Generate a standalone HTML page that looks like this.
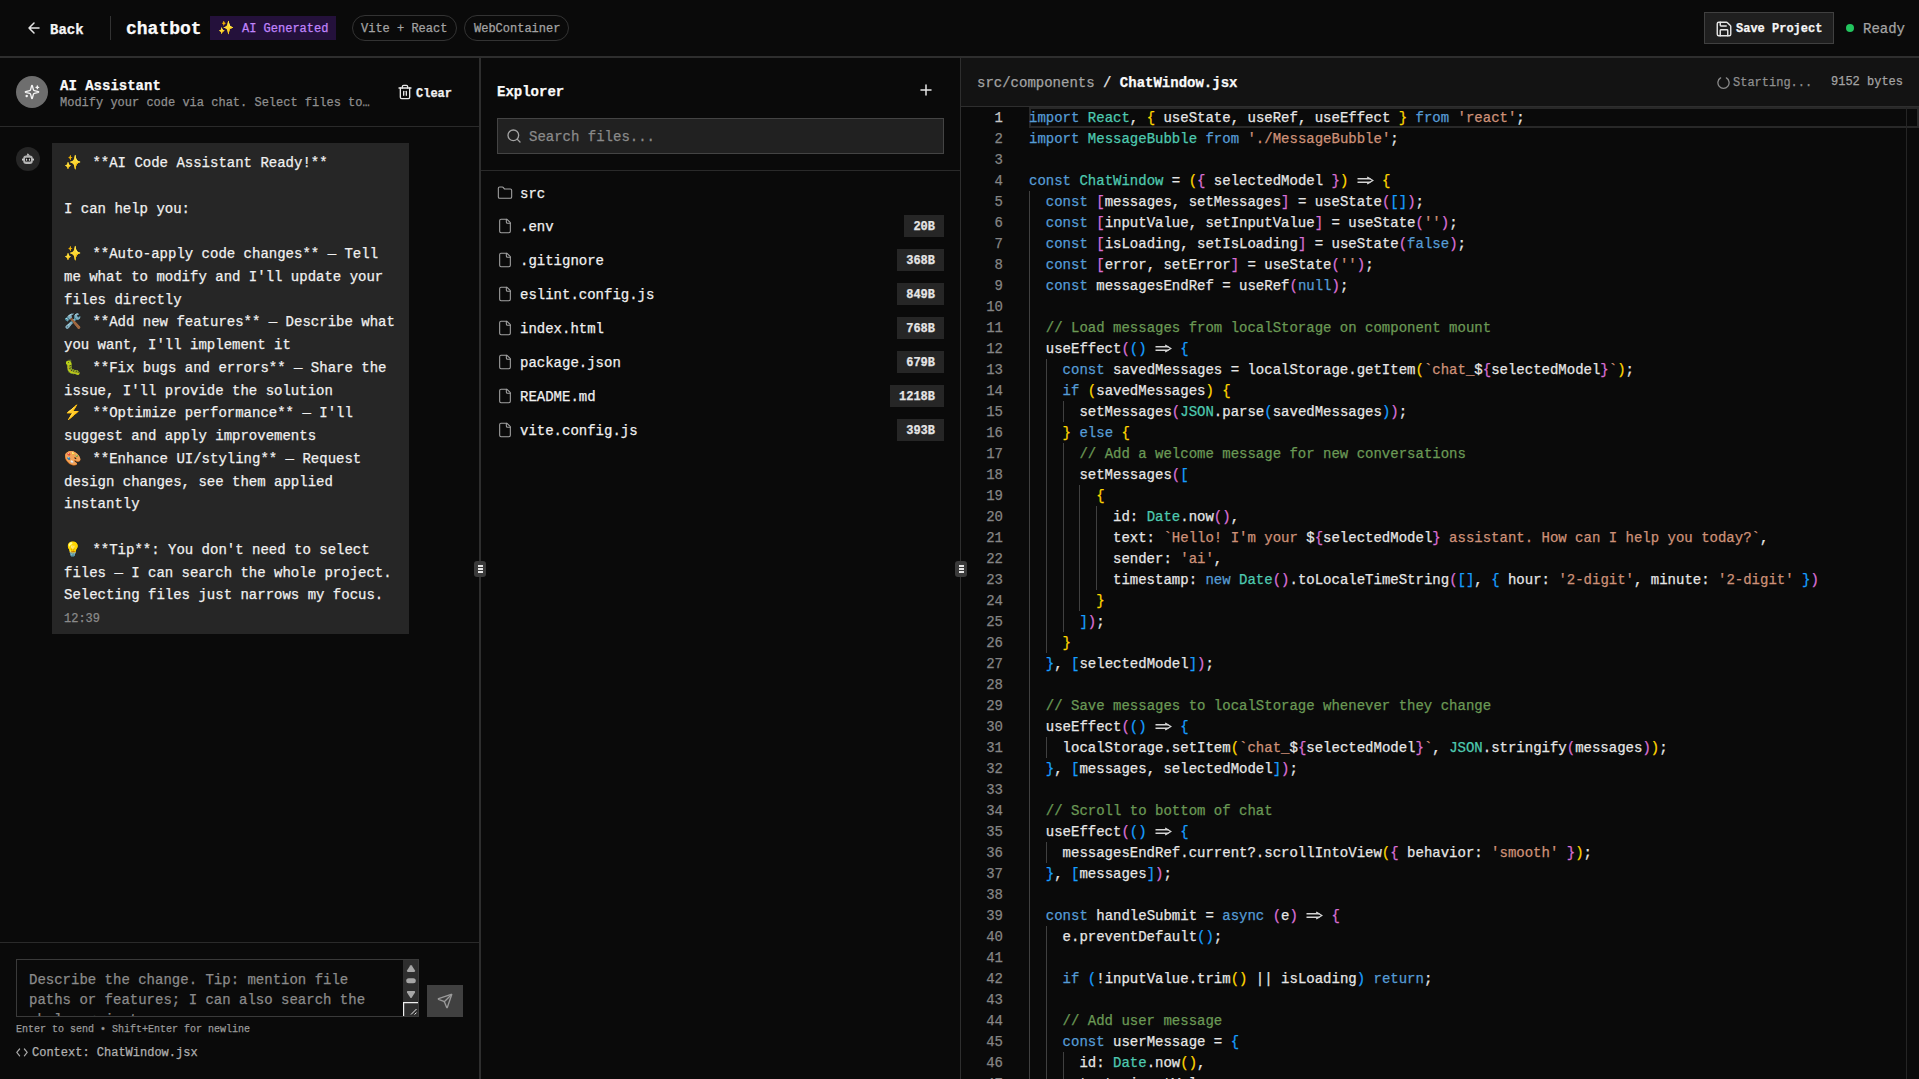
<!DOCTYPE html>
<html><head><meta charset="utf-8">
<style>
*{box-sizing:border-box;margin:0;padding:0}
html,body{width:1919px;height:1079px;overflow:hidden;background:#0a0a0a;font-family:"Liberation Mono",monospace;color:#e5e5e5;-webkit-text-stroke:0.25px currentColor}
.abs{position:absolute}
#hdr{position:absolute;left:0;top:0;width:1919px;height:58px;background:#0a0a0a;border-bottom:2px solid #2e2e2e}
.t14b{font-size:14px;font-weight:bold}
/* chat */
#chat{position:absolute;left:0;top:58px;width:479px;height:1021px;background:#0a0a0a}
#div1{position:absolute;z-index:4;left:479px;top:58px;width:2px;height:1021px;background:#2e2e2e}
#explorer{position:absolute;left:481px;top:58px;width:479px;height:1021px;background:#0a0a0a}
#div2{position:absolute;z-index:4;left:960px;top:58px;width:1px;height:1021px;background:#2e2e2e}
#editor{position:absolute;left:961px;top:58px;width:958px;height:1021px;background:#0a0a0a;overflow:hidden}
.handle{position:absolute;z-index:5;width:12px;height:16px;background:#3a3a3a;border-radius:3px}
.handle i{position:absolute;left:3.5px;width:5px;height:2px;background:#e5e5e5}
/* code */
#code{position:absolute;left:68px;top:49px;width:890px;height:980px;font-size:14px;line-height:21px;color:#e6e6e6}
.ln{position:absolute;left:0;white-space:pre;height:21px;margin-top:1px}
#gut{position:absolute;left:0;top:50px;width:42px;font-size:14px;line-height:21px;color:#858585}
.num{position:absolute;right:0;height:21px;text-align:right;white-space:pre}
.num.act{color:#c6c6c6}
.k{color:#569cd6}.t{color:#4ec9b0}.s{color:#ce9178}.c{color:#6a9955}
.ar{display:inline-block;width:16.8px;height:21px;vertical-align:top;position:relative;top:-1px}.ar svg{display:block}
.ig{position:absolute;width:1px;background:#404040}
.em{display:inline-block;width:28.4px;white-space:nowrap}
</style></head><body>

<div id="hdr">
  <svg class="abs" style="left:27px;top:21px" width="14" height="14" viewBox="0 0 14 14" fill="none" stroke="#e5e5e5" stroke-width="1.5" stroke-linecap="round" stroke-linejoin="round"><path d="M12 7H2M7 2L2 7l5 5"/></svg>
  <div class="abs t14b" style="left:50px;top:21px;line-height:18px;color:#f5f5f5">Back</div>
  <div class="abs" style="left:110px;top:16px;width:1px;height:24px;background:#333"></div>
  <div class="abs" style="left:126px;top:17px;font-size:18px;font-weight:bold;line-height:24px;color:#fafafa">chatbot</div>
  <div class="abs" style="left:210px;top:16px;width:126px;height:24px;background:#24113b"></div><div class="abs" style="left:218px;top:17px;font-size:13px;line-height:24px">✨</div><div class="abs" style="left:242px;top:17px;color:#c084fc;font-size:12px;line-height:24px;white-space:pre">AI Generated</div>
  <div class="abs" style="left:352px;top:15px;width:105px;height:26px;border:1px solid #333;border-radius:13px;color:#a3a3a3;font-size:12px;line-height:24px;padding-left:8px;padding-top:1px">Vite + React</div>
  <div class="abs" style="left:464px;top:15px;width:105px;height:26px;border:1px solid #333;border-radius:13px;color:#a3a3a3;font-size:12px;line-height:24px;padding-left:9px;padding-top:1px">WebContainer</div>
  <div class="abs" style="left:1704px;top:12px;width:130px;height:32px;background:#1f1f1f;border:1px solid #404040"></div>
  <svg class="abs" style="left:1715px;top:20px" width="18" height="18" viewBox="0 0 24 24" fill="none" stroke="#e5e5e5" stroke-width="1.9" stroke-linecap="round" stroke-linejoin="round"><path d="M15.2 3a2 2 0 0 1 1.4.6l3.8 3.8a2 2 0 0 1 .6 1.4V19a2 2 0 0 1-2 2H5a2 2 0 0 1-2-2V5a2 2 0 0 1 2-2z"/><path d="M17 21v-7a1 1 0 0 0-1-1H8a1 1 0 0 0-1 1v7"/><path d="M7 3v4a1 1 0 0 0 1 1h7"/></svg>
  <div class="abs" style="left:1736px;top:21px;font-size:12px;font-weight:bold;line-height:16px;color:#f5f5f5">Save Project</div>
  <div class="abs" style="left:1846px;top:24px;width:8px;height:8px;border-radius:50%;background:#22c55e"></div>
  <div class="abs" style="left:1863px;top:20px;font-size:14px;line-height:18px;color:#a3a3a3">Ready</div>
</div>

<div id="chat">
  <div class="abs" style="left:0;top:0;width:479px;height:69px;border-bottom:1px solid #2a2a2a"></div>
  <div class="abs" style="left:16px;top:18px;width:32px;height:32px;border-radius:50%;background:#6e6e6e"></div>
  <svg class="abs" style="left:24px;top:26px" width="16" height="16" viewBox="0 0 24 24" fill="none" stroke="#f5f5f5" stroke-width="2" stroke-linecap="round" stroke-linejoin="round"><path d="M9.937 15.5A2 2 0 0 0 8.5 14.063l-6.135-1.582a.5.5 0 0 1 0-.962L8.5 9.936A2 2 0 0 0 9.937 8.5l1.582-6.135a.5.5 0 0 1 .963 0L14.063 8.5A2 2 0 0 0 15.5 9.937l6.135 1.581a.5.5 0 0 1 0 .964L15.5 14.063a2 2 0 0 0-1.437 1.437l-1.582 6.135a.5.5 0 0 1-.963 0z"/><path d="M20 3v4"/><path d="M22 5h-4"/><path d="M4 17v2"/><path d="M5 18H3"/></svg>
  <div class="abs t14b" style="left:60px;top:19px;line-height:18px;color:#fafafa">AI Assistant</div>
  <div class="abs" style="left:60px;top:37px;font-size:12px;line-height:16px;color:#8f8f8f;white-space:pre">Modify your code via chat. Select files to…</div>
  <svg class="abs" style="left:397px;top:26px" width="16" height="16" viewBox="0 0 24 24" fill="none" stroke="#e5e5e5" stroke-width="2" stroke-linecap="round" stroke-linejoin="round"><path d="M3 6h18"/><path d="M19 6v14c0 1-1 2-2 2H7c-1 0-2-1-2-2V6"/><path d="M8 6V4c0-1 1-2 2-2h4c1 0 2 1 2 2v2"/><line x1="10" x2="10" y1="11" y2="17"/><line x1="14" x2="14" y1="11" y2="17"/></svg>
  <div class="abs" style="left:416px;top:28px;font-size:12px;font-weight:bold;line-height:16px;color:#f0f0f0">Clear</div>

  <div class="abs" style="left:16px;top:89px;width:24px;height:24px;border-radius:50%;background:#262626"></div>
  <svg class="abs" style="left:22px;top:95px" width="12" height="12" viewBox="0 0 12 12"><path d="M4.6 2.8L5.4 0.6Q6 0.3 6.6 0.9L8 2.8Z" fill="#bdbdbd"/><rect x="1.2" y="2.6" width="9.6" height="8.4" rx="3" fill="#b5b5b5"/><circle cx="0.9" cy="6.6" r="1.1" fill="#c8c8c8"/><circle cx="11.1" cy="6.6" r="1.1" fill="#c8c8c8"/><rect x="3.2" y="4.8" width="5.6" height="3.8" rx="0.6" fill="#0a0a0a"/><rect x="4.2" y="5.5" width="1" height="2.2" rx="0.5" fill="#fff"/><rect x="6.8" y="5.5" width="1" height="2.2" rx="0.5" fill="#fff"/></svg>
  <div class="abs" style="left:52px;top:85px;width:357px;height:491px;background:#262626"></div>
  <div id="bub" class="abs" style="left:64px;top:94px;font-size:14px;line-height:22.75px;color:#f0f0f0;white-space:pre"><span class="em">✨</span>**AI Code Assistant Ready!**

I can help you:

<span class="em">✨</span>**Auto-apply code changes** — Tell
me what to modify and I'll update your
files directly
<span class="em">🛠️</span>**Add new features** — Describe what
you want, I'll implement it
<span class="em">🐛</span>**Fix bugs and errors** — Share the
issue, I'll provide the solution
<span class="em">⚡️</span>**Optimize performance** — I'll
suggest and apply improvements
<span class="em">🎨</span>**Enhance UI/styling** — Request
design changes, see them applied
instantly

<span class="em">💡</span>**Tip**: You don't need to select
files — I can search the whole project.
Selecting files just narrows my focus.</div>
  <div class="abs" style="left:64px;top:553px;font-size:12px;line-height:16px;color:#8a8a8a">12:39</div>

  <div class="abs" style="left:0;top:884px;width:479px;height:1px;background:#2a2a2a"></div>
  <div class="abs" style="left:16px;top:901px;width:403px;height:58px;border:1px solid #3a3a3a;background:#0a0a0a;overflow:hidden">
    <div class="abs" style="left:12px;top:10px;font-size:14px;line-height:20px;color:#8a8a8a;white-space:pre">Describe the change. Tip: mention file
paths or features; I can also search the
whole project.</div>
    <div class="abs" style="left:386px;top:0;width:16px;height:56px;background:#2e2e2e"></div>
    <svg class="abs" style="left:386px;top:1px" width="16" height="55" viewBox="0 0 16 55"><path d="M7.2 4.6Q8 3.6 8.8 4.6L12 9.6Q12.6 11 11 11H5Q3.4 11 4 9.6Z" fill="#a6a6a6"/><rect x="3.2" y="17.2" width="9.6" height="5" rx="2.5" fill="#a6a6a6"/><path d="M7.2 36.4Q8 37.4 8.8 36.4L12 31.4Q12.6 30 11 30H5Q3.4 30 4 31.4Z" fill="#a6a6a6"/><path d="M0.6 55V41.6H15.6" fill="none" stroke="#f0f0f0" stroke-width="1.2"/><path d="M8 53.5L13.5 48M11.6 53.5L13.5 51.6" stroke="#f0f0f0" stroke-width="1"/></svg>
  </div>
  <div class="abs" style="left:427px;top:927px;width:36px;height:32px;background:#404040"></div>
  <svg class="abs" style="left:437px;top:935px" width="16" height="16" viewBox="0 0 24 24" fill="none" stroke="#9a9a9a" stroke-width="2" stroke-linecap="round" stroke-linejoin="round"><path d="M14.536 21.686a.5.5 0 0 0 .937-.024l6.5-19a.496.496 0 0 0-.635-.635l-19 6.5a.5.5 0 0 0-.024.937l7.93 3.18a2 2 0 0 1 1.112 1.11z"/><path d="m21.854 2.147-10.94 10.939"/></svg>
  <div class="abs" style="left:16px;top:966px;font-size:10px;line-height:12px;color:#9a9a9a;white-space:pre">Enter to send • Shift+Enter for newline</div>
  <svg class="abs" style="left:16px;top:990px" width="12" height="9" viewBox="0 0 12 9" fill="none" stroke="#a8a8a8" stroke-width="1.2" stroke-linecap="round" stroke-linejoin="round"><path d="M3.6 1L0.8 4.4L3.6 7.8"/><path d="M8.4 1L11.2 4.4L8.4 7.8"/></svg>
  <div class="abs" style="left:32px;top:987px;font-size:12px;line-height:16px;color:#b0b0b0;white-space:pre">Context: ChatWindow.jsx</div>
</div>
<div id="div1"><div class="handle" style="left:-5px;top:503px"><i style="top:4px"></i><i style="top:7px"></i><i style="top:10px"></i></div></div>
<div id="explorer">
  <div class="abs t14b" style="left:16px;top:25px;line-height:18px;color:#fafafa">Explorer</div>
  <svg class="abs" style="left:439px;top:26px" width="12" height="12" viewBox="0 0 12 12" fill="none" stroke="#e5e5e5" stroke-width="1.5" stroke-linecap="round"><path d="M1 6H11M6 1V11"/></svg>
  <div class="abs" style="left:16px;top:60px;width:447px;height:36px;background:#212121;border:1px solid #444"></div>
  <svg class="abs" style="left:25px;top:70px" width="16" height="16" viewBox="0 0 24 24" fill="none" stroke="#a3a3a3" stroke-width="2" stroke-linecap="round" stroke-linejoin="round"><circle cx="11" cy="11" r="8"/><path d="m21 21-4.3-4.3"/></svg>
  <div class="abs" style="left:48px;top:70px;font-size:14px;line-height:18px;color:#8a8a8a;white-space:pre">Search files...</div>
  <div class="abs" style="left:0;top:112px;width:479px;height:1px;background:#2a2a2a"></div>
<svg class="abs" style="left:16px;top:127px" width="16" height="16" viewBox="0 0 24 24" fill="none" stroke="#a3a3a3" stroke-width="1.6" stroke-linecap="round" stroke-linejoin="round"><path d="M20 20a2 2 0 0 0 2-2V8a2 2 0 0 0-2-2h-7.9a2 2 0 0 1-1.69-.9L9.6 3.9A2 2 0 0 0 7.93 3H4a2 2 0 0 0-2 2v13a2 2 0 0 0 2 2Z"/></svg>
<div class="abs" style="left:39px;top:127px;font-size:14px;line-height:18px;color:#f0f0f0">src</div>
<svg class="abs" style="left:16px;top:160px" width="16" height="16" viewBox="0 0 24 24" fill="none" stroke="#a3a3a3" stroke-width="1.6" stroke-linecap="round" stroke-linejoin="round"><path d="M15 2H6a2 2 0 0 0-2 2v16a2 2 0 0 0 2 2h12a2 2 0 0 0 2-2V7Z"/><path d="M14 2v4a2 2 0 0 0 2 2h4"/></svg>
<div class="abs" style="left:39px;top:160px;font-size:14px;line-height:18px;color:#f0f0f0">.env</div>
<div class="abs" style="right:16px;top:157px;height:22px;padding:0 9px;background:#262626;font-size:12px;font-weight:bold;line-height:22px;color:#e5e5e5"><span style="position:relative;top:1px">20B</span></div>
<svg class="abs" style="left:16px;top:194px" width="16" height="16" viewBox="0 0 24 24" fill="none" stroke="#a3a3a3" stroke-width="1.6" stroke-linecap="round" stroke-linejoin="round"><path d="M15 2H6a2 2 0 0 0-2 2v16a2 2 0 0 0 2 2h12a2 2 0 0 0 2-2V7Z"/><path d="M14 2v4a2 2 0 0 0 2 2h4"/></svg>
<div class="abs" style="left:39px;top:194px;font-size:14px;line-height:18px;color:#f0f0f0">.gitignore</div>
<div class="abs" style="right:16px;top:191px;height:22px;padding:0 9px;background:#262626;font-size:12px;font-weight:bold;line-height:22px;color:#e5e5e5"><span style="position:relative;top:1px">368B</span></div>
<svg class="abs" style="left:16px;top:228px" width="16" height="16" viewBox="0 0 24 24" fill="none" stroke="#a3a3a3" stroke-width="1.6" stroke-linecap="round" stroke-linejoin="round"><path d="M15 2H6a2 2 0 0 0-2 2v16a2 2 0 0 0 2 2h12a2 2 0 0 0 2-2V7Z"/><path d="M14 2v4a2 2 0 0 0 2 2h4"/></svg>
<div class="abs" style="left:39px;top:228px;font-size:14px;line-height:18px;color:#f0f0f0">eslint.config.js</div>
<div class="abs" style="right:16px;top:225px;height:22px;padding:0 9px;background:#262626;font-size:12px;font-weight:bold;line-height:22px;color:#e5e5e5"><span style="position:relative;top:1px">849B</span></div>
<svg class="abs" style="left:16px;top:262px" width="16" height="16" viewBox="0 0 24 24" fill="none" stroke="#a3a3a3" stroke-width="1.6" stroke-linecap="round" stroke-linejoin="round"><path d="M15 2H6a2 2 0 0 0-2 2v16a2 2 0 0 0 2 2h12a2 2 0 0 0 2-2V7Z"/><path d="M14 2v4a2 2 0 0 0 2 2h4"/></svg>
<div class="abs" style="left:39px;top:262px;font-size:14px;line-height:18px;color:#f0f0f0">index.html</div>
<div class="abs" style="right:16px;top:259px;height:22px;padding:0 9px;background:#262626;font-size:12px;font-weight:bold;line-height:22px;color:#e5e5e5"><span style="position:relative;top:1px">768B</span></div>
<svg class="abs" style="left:16px;top:296px" width="16" height="16" viewBox="0 0 24 24" fill="none" stroke="#a3a3a3" stroke-width="1.6" stroke-linecap="round" stroke-linejoin="round"><path d="M15 2H6a2 2 0 0 0-2 2v16a2 2 0 0 0 2 2h12a2 2 0 0 0 2-2V7Z"/><path d="M14 2v4a2 2 0 0 0 2 2h4"/></svg>
<div class="abs" style="left:39px;top:296px;font-size:14px;line-height:18px;color:#f0f0f0">package.json</div>
<div class="abs" style="right:16px;top:293px;height:22px;padding:0 9px;background:#262626;font-size:12px;font-weight:bold;line-height:22px;color:#e5e5e5"><span style="position:relative;top:1px">679B</span></div>
<svg class="abs" style="left:16px;top:330px" width="16" height="16" viewBox="0 0 24 24" fill="none" stroke="#a3a3a3" stroke-width="1.6" stroke-linecap="round" stroke-linejoin="round"><path d="M15 2H6a2 2 0 0 0-2 2v16a2 2 0 0 0 2 2h12a2 2 0 0 0 2-2V7Z"/><path d="M14 2v4a2 2 0 0 0 2 2h4"/></svg>
<div class="abs" style="left:39px;top:330px;font-size:14px;line-height:18px;color:#f0f0f0">README.md</div>
<div class="abs" style="right:16px;top:327px;height:22px;padding:0 9px;background:#262626;font-size:12px;font-weight:bold;line-height:22px;color:#e5e5e5"><span style="position:relative;top:1px">1218B</span></div>
<svg class="abs" style="left:16px;top:364px" width="16" height="16" viewBox="0 0 24 24" fill="none" stroke="#a3a3a3" stroke-width="1.6" stroke-linecap="round" stroke-linejoin="round"><path d="M15 2H6a2 2 0 0 0-2 2v16a2 2 0 0 0 2 2h12a2 2 0 0 0 2-2V7Z"/><path d="M14 2v4a2 2 0 0 0 2 2h4"/></svg>
<div class="abs" style="left:39px;top:364px;font-size:14px;line-height:18px;color:#f0f0f0">vite.config.js</div>
<div class="abs" style="right:16px;top:361px;height:22px;padding:0 9px;background:#262626;font-size:12px;font-weight:bold;line-height:22px;color:#e5e5e5"><span style="position:relative;top:1px">393B</span></div>
</div>
<div id="div2"><div class="handle" style="left:-5px;top:503px"><i style="top:4px"></i><i style="top:7px"></i><i style="top:10px"></i></div></div>
<div id="editor">
  <div class="abs" style="left:0;top:0;width:958px;height:49px;background:#131313;border-bottom:1px solid #2e2e2e"></div>
  <div class="abs" style="left:16px;top:16px;font-size:14px;line-height:18px;color:#a3a3a3;white-space:pre">src/components <span style="color:#e5e5e5">/</span> <b style="color:#fafafa">ChatWindow.jsx</b></div>
  <svg class="abs" style="left:756px;top:18px" width="13" height="13" viewBox="0 0 13 13" fill="none" stroke="#8a8a8a" stroke-width="1.3" stroke-linecap="round"><path d="M3.6 1.9A5.6 5.6 0 1 0 9.4 1.9"/></svg>
  <div class="abs" style="left:772px;top:17px;font-size:12px;line-height:16px;color:#8f8f8f;white-space:pre">Starting...</div>
  <div class="abs" style="left:870px;top:16px;font-size:12px;line-height:16px;color:#a3a3a3;white-space:pre">9152 bytes</div>
  <div class="abs" style="left:945px;top:49px;width:1px;height:980px;background:#252525;z-index:3"></div>
  <div id="gut"><div class="num act" style="top:0px">1</div><div class="num" style="top:21px">2</div><div class="num" style="top:42px">3</div><div class="num" style="top:63px">4</div><div class="num" style="top:84px">5</div><div class="num" style="top:105px">6</div><div class="num" style="top:126px">7</div><div class="num" style="top:147px">8</div><div class="num" style="top:168px">9</div><div class="num" style="top:189px">10</div><div class="num" style="top:210px">11</div><div class="num" style="top:231px">12</div><div class="num" style="top:252px">13</div><div class="num" style="top:273px">14</div><div class="num" style="top:294px">15</div><div class="num" style="top:315px">16</div><div class="num" style="top:336px">17</div><div class="num" style="top:357px">18</div><div class="num" style="top:378px">19</div><div class="num" style="top:399px">20</div><div class="num" style="top:420px">21</div><div class="num" style="top:441px">22</div><div class="num" style="top:462px">23</div><div class="num" style="top:483px">24</div><div class="num" style="top:504px">25</div><div class="num" style="top:525px">26</div><div class="num" style="top:546px">27</div><div class="num" style="top:567px">28</div><div class="num" style="top:588px">29</div><div class="num" style="top:609px">30</div><div class="num" style="top:630px">31</div><div class="num" style="top:651px">32</div><div class="num" style="top:672px">33</div><div class="num" style="top:693px">34</div><div class="num" style="top:714px">35</div><div class="num" style="top:735px">36</div><div class="num" style="top:756px">37</div><div class="num" style="top:777px">38</div><div class="num" style="top:798px">39</div><div class="num" style="top:819px">40</div><div class="num" style="top:840px">41</div><div class="num" style="top:861px">42</div><div class="num" style="top:882px">43</div><div class="num" style="top:903px">44</div><div class="num" style="top:924px">45</div><div class="num" style="top:945px">46</div><div class="num" style="top:966px">47</div><div class="num" style="top:987px">48</div></div>
  <div id="code"><div class="ig" style="left:0.0px;top:84px;height:924px"></div><div class="ig" style="left:16.8px;top:252px;height:294px"></div><div class="ig" style="left:16.8px;top:630px;height:21px"></div><div class="ig" style="left:16.8px;top:735px;height:21px"></div><div class="ig" style="left:16.8px;top:819px;height:189px"></div><div class="ig" style="left:33.6px;top:294px;height:21px"></div><div class="ig" style="left:33.6px;top:336px;height:189px"></div><div class="ig" style="left:33.6px;top:945px;height:63px"></div><div class="ig" style="left:50.4px;top:378px;height:126px"></div><div class="ig" style="left:67.2px;top:399px;height:84px"></div><div class="abs" style="left:0;top:0;width:890px;height:21px;border:2px solid #282828"></div><div class="ln" style="top:0px"><span class="k">import</span> <span class="t">React</span>, <span style="color:#ffd700">{</span> useState, useRef, useEffect <span style="color:#ffd700">}</span> <span class="k">from</span> <span class="s">'react'</span>;</div><div class="ln" style="top:21px"><span class="k">import</span> <span class="t">MessageBubble</span> <span class="k">from</span> <span class="s">'./MessageBubble'</span>;</div><div class="ln" style="top:42px"></div><div class="ln" style="top:63px"><span class="k">const</span> <span class="t">ChatWindow</span> = <span style="color:#ffd700">(</span><span style="color:#da70d6">{</span> selectedModel <span style="color:#da70d6">}</span><span style="color:#ffd700">)</span> <span class="ar"><svg width="16.8" height="21" viewBox="0 0 16.8 21" fill="none" stroke="#d4d4d4" stroke-width="1.4"><path d="M0.5 8.8H13.5M0.5 12.2H13.5"/><path d="M10.2 7L15.8 10.5L10.2 14" stroke-linejoin="miter"/></svg></span> <span style="color:#ffd700">{</span></div><div class="ln" style="top:84px">  <span class="k">const</span> <span style="color:#da70d6">[</span>messages, setMessages<span style="color:#da70d6">]</span> = useState<span style="color:#da70d6">(</span><span style="color:#179fff">[</span><span style="color:#179fff">]</span><span style="color:#da70d6">)</span>;</div><div class="ln" style="top:105px">  <span class="k">const</span> <span style="color:#da70d6">[</span>inputValue, setInputValue<span style="color:#da70d6">]</span> = useState<span style="color:#da70d6">(</span><span class="s">''</span><span style="color:#da70d6">)</span>;</div><div class="ln" style="top:126px">  <span class="k">const</span> <span style="color:#da70d6">[</span>isLoading, setIsLoading<span style="color:#da70d6">]</span> = useState<span style="color:#da70d6">(</span><span class="k">false</span><span style="color:#da70d6">)</span>;</div><div class="ln" style="top:147px">  <span class="k">const</span> <span style="color:#da70d6">[</span>error, setError<span style="color:#da70d6">]</span> = useState<span style="color:#da70d6">(</span><span class="s">''</span><span style="color:#da70d6">)</span>;</div><div class="ln" style="top:168px">  <span class="k">const</span> messagesEndRef = useRef<span style="color:#da70d6">(</span><span class="k">null</span><span style="color:#da70d6">)</span>;</div><div class="ln" style="top:189px"></div><div class="ln" style="top:210px">  <span class="c">// Load messages from localStorage on component mount</span></div><div class="ln" style="top:231px">  useEffect<span style="color:#da70d6">(</span><span style="color:#179fff">(</span><span style="color:#179fff">)</span> <span class="ar"><svg width="16.8" height="21" viewBox="0 0 16.8 21" fill="none" stroke="#d4d4d4" stroke-width="1.4"><path d="M0.5 8.8H13.5M0.5 12.2H13.5"/><path d="M10.2 7L15.8 10.5L10.2 14" stroke-linejoin="miter"/></svg></span> <span style="color:#179fff">{</span></div><div class="ln" style="top:252px">    <span class="k">const</span> savedMessages = localStorage.getItem<span style="color:#ffd700">(</span><span class="s">`chat_</span>$<span style="color:#da70d6">{</span>selectedModel<span style="color:#da70d6">}</span><span class="s">`</span><span style="color:#ffd700">)</span>;</div><div class="ln" style="top:273px">    <span class="k">if</span> <span style="color:#ffd700">(</span>savedMessages<span style="color:#ffd700">)</span> <span style="color:#ffd700">{</span></div><div class="ln" style="top:294px">      setMessages<span style="color:#da70d6">(</span><span class="t">JSON</span>.parse<span style="color:#179fff">(</span>savedMessages<span style="color:#179fff">)</span><span style="color:#da70d6">)</span>;</div><div class="ln" style="top:315px">    <span style="color:#ffd700">}</span> <span class="k">else</span> <span style="color:#ffd700">{</span></div><div class="ln" style="top:336px">      <span class="c">// Add a welcome message for new conversations</span></div><div class="ln" style="top:357px">      setMessages<span style="color:#da70d6">(</span><span style="color:#179fff">[</span></div><div class="ln" style="top:378px">        <span style="color:#ffd700">{</span></div><div class="ln" style="top:399px">          id: <span class="t">Date</span>.now<span style="color:#da70d6">(</span><span style="color:#da70d6">)</span>,</div><div class="ln" style="top:420px">          text: <span class="s">`Hello! I'm your </span>$<span style="color:#da70d6">{</span>selectedModel<span style="color:#da70d6">}</span><span class="s"> assistant. How can I help you today?`</span>,</div><div class="ln" style="top:441px">          sender: <span class="s">'ai'</span>,</div><div class="ln" style="top:462px">          timestamp: <span class="k">new</span> <span class="t">Date</span><span style="color:#da70d6">(</span><span style="color:#da70d6">)</span>.toLocaleTimeString<span style="color:#da70d6">(</span><span style="color:#179fff">[</span><span style="color:#179fff">]</span>, <span style="color:#179fff">{</span> hour: <span class="s">'2-digit'</span>, minute: <span class="s">'2-digit'</span> <span style="color:#179fff">}</span><span style="color:#da70d6">)</span></div><div class="ln" style="top:483px">        <span style="color:#ffd700">}</span></div><div class="ln" style="top:504px">      <span style="color:#179fff">]</span><span style="color:#da70d6">)</span>;</div><div class="ln" style="top:525px">    <span style="color:#ffd700">}</span></div><div class="ln" style="top:546px">  <span style="color:#179fff">}</span>, <span style="color:#179fff">[</span>selectedModel<span style="color:#179fff">]</span><span style="color:#da70d6">)</span>;</div><div class="ln" style="top:567px"></div><div class="ln" style="top:588px">  <span class="c">// Save messages to localStorage whenever they change</span></div><div class="ln" style="top:609px">  useEffect<span style="color:#da70d6">(</span><span style="color:#179fff">(</span><span style="color:#179fff">)</span> <span class="ar"><svg width="16.8" height="21" viewBox="0 0 16.8 21" fill="none" stroke="#d4d4d4" stroke-width="1.4"><path d="M0.5 8.8H13.5M0.5 12.2H13.5"/><path d="M10.2 7L15.8 10.5L10.2 14" stroke-linejoin="miter"/></svg></span> <span style="color:#179fff">{</span></div><div class="ln" style="top:630px">    localStorage.setItem<span style="color:#ffd700">(</span><span class="s">`chat_</span>$<span style="color:#da70d6">{</span>selectedModel<span style="color:#da70d6">}</span><span class="s">`</span>, <span class="t">JSON</span>.stringify<span style="color:#da70d6">(</span>messages<span style="color:#da70d6">)</span><span style="color:#ffd700">)</span>;</div><div class="ln" style="top:651px">  <span style="color:#179fff">}</span>, <span style="color:#179fff">[</span>messages, selectedModel<span style="color:#179fff">]</span><span style="color:#da70d6">)</span>;</div><div class="ln" style="top:672px"></div><div class="ln" style="top:693px">  <span class="c">// Scroll to bottom of chat</span></div><div class="ln" style="top:714px">  useEffect<span style="color:#da70d6">(</span><span style="color:#179fff">(</span><span style="color:#179fff">)</span> <span class="ar"><svg width="16.8" height="21" viewBox="0 0 16.8 21" fill="none" stroke="#d4d4d4" stroke-width="1.4"><path d="M0.5 8.8H13.5M0.5 12.2H13.5"/><path d="M10.2 7L15.8 10.5L10.2 14" stroke-linejoin="miter"/></svg></span> <span style="color:#179fff">{</span></div><div class="ln" style="top:735px">    messagesEndRef.current?.scrollIntoView<span style="color:#ffd700">(</span><span style="color:#da70d6">{</span> behavior: <span class="s">'smooth'</span> <span style="color:#da70d6">}</span><span style="color:#ffd700">)</span>;</div><div class="ln" style="top:756px">  <span style="color:#179fff">}</span>, <span style="color:#179fff">[</span>messages<span style="color:#179fff">]</span><span style="color:#da70d6">)</span>;</div><div class="ln" style="top:777px"></div><div class="ln" style="top:798px">  <span class="k">const</span> handleSubmit = <span class="k">async</span> <span style="color:#da70d6">(</span>e<span style="color:#da70d6">)</span> <span class="ar"><svg width="16.8" height="21" viewBox="0 0 16.8 21" fill="none" stroke="#d4d4d4" stroke-width="1.4"><path d="M0.5 8.8H13.5M0.5 12.2H13.5"/><path d="M10.2 7L15.8 10.5L10.2 14" stroke-linejoin="miter"/></svg></span> <span style="color:#da70d6">{</span></div><div class="ln" style="top:819px">    e.preventDefault<span style="color:#179fff">(</span><span style="color:#179fff">)</span>;</div><div class="ln" style="top:840px"></div><div class="ln" style="top:861px">    <span class="k">if</span> <span style="color:#179fff">(</span>!inputValue.trim<span style="color:#ffd700">(</span><span style="color:#ffd700">)</span> || isLoading<span style="color:#179fff">)</span> <span class="k">return</span>;</div><div class="ln" style="top:882px"></div><div class="ln" style="top:903px">    <span class="c">// Add user message</span></div><div class="ln" style="top:924px">    <span class="k">const</span> userMessage = <span style="color:#179fff">{</span></div><div class="ln" style="top:945px">      id: <span class="t">Date</span>.now<span style="color:#ffd700">(</span><span style="color:#ffd700">)</span>,</div><div class="ln" style="top:966px">      text: inputValue,</div><div class="ln" style="top:987px">      sender: <span class="s">'user'</span>,</div></div>
</div>
</body></html>
